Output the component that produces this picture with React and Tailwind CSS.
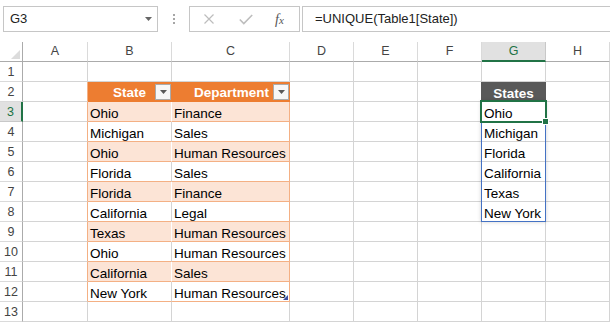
import React from 'react';

const cols = ['A', 'B', 'C', 'D', 'E', 'F', 'G', 'H'];

const tableRows = [
  ['Ohio', 'Finance'],
  ['Michigan', 'Sales'],
  ['Ohio', 'Human Resources'],
  ['Florida', 'Sales'],
  ['Florida', 'Finance'],
  ['California', 'Legal'],
  ['Texas', 'Human Resources'],
  ['Ohio', 'Human Resources'],
  ['California', 'Sales'],
  ['New York', 'Human Resources'],
];

const states = ['Ohio', 'Michigan', 'Florida', 'California', 'Texas', 'New York'];

const FilterButton = () => (
  <span className="flex h-[16px] w-[16px] shrink-0 items-center justify-center border border-[#ABABAB] bg-[#F7F7F7]">
    <svg width="7" height="4" viewBox="0 0 7 4">
      <path d="M0 0h7L3.5 4z" fill="#595959" />
    </svg>
  </span>
);

const FormulaBar = () => (
  <div className="flex h-[42px] items-start pt-[6px] text-[13px] text-[#222]">
    <div className="ml-[3px] flex h-[26px] w-[155px] shrink-0 items-center justify-between border border-[#C6C6C6] bg-white pl-[6px] pr-[5px]">
      <span>G3</span>
      <svg width="7" height="4" viewBox="0 0 7 4">
        <path d="M0 0h7L3.5 4z" fill="#666" />
      </svg>
    </div>
    <div className="flex h-[26px] w-[31px] shrink-0 flex-col items-center justify-center gap-[2px]">
      <span className="h-[2px] w-[2px] bg-[#A6A6A6]" />
      <span className="h-[2px] w-[2px] bg-[#A6A6A6]" />
      <span className="h-[2px] w-[2px] bg-[#A6A6A6]" />
    </div>
    <div className="flex h-[26px] w-[111px] shrink-0 items-center border border-[#C6C6C6] bg-white">
      <svg className="ml-[14px]" width="10" height="10" viewBox="0 0 10 10">
        <path d="M0.5 0.5l9 9M9.5 0.5l-9 9" stroke="#BDBDBD" strokeWidth="1.2" fill="none" />
      </svg>
      <svg className="ml-[25px]" width="14" height="11" viewBox="0 0 14 11">
        <path d="M0.8 5.5l4 4L13.2 1" stroke="#BDBDBD" strokeWidth="1.6" fill="none" />
      </svg>
      <span className="ml-[22px] font-['Liberation_Serif',serif] text-[14px] italic text-[#555]">
        f<span className="text-[11px]">x</span>
      </span>
    </div>
    <div className="ml-[2px] flex h-[26px] w-[330px] shrink-0 items-center border border-[#C6C6C6] bg-white pl-[12px]">
      =UNIQUE(Table1[State])
    </div>
  </div>
);

const cellClass = (r, c) => {
  // rows 2..12 belong to the table in B:C, G2..G8 hold the spill
  if (c === 'B') {
    if (r === 2) return 'bg-[#ED7D31] border-r-[#ED7D31] border-b-[#ED7D31]';
    if (r >= 3 && r <= 12) {
      return r % 2 === 1
        ? 'bg-[#FCE4D6] border-r-white border-b-[#F4B084]'
        : 'bg-white border-r-[#D4D4D4] border-b-[#F4B084]';
    }
  }
  if (c === 'C') {
    if (r === 2) return 'bg-[#ED7D31] border-r-[#ED7D31] border-b-[#ED7D31]';
    if (r >= 3 && r <= 12) {
      return r % 2 === 1
        ? 'bg-[#FCE4D6] border-r-[#F4B084] border-b-[#F4B084]'
        : 'bg-white border-r-[#F4B084] border-b-[#F4B084]';
    }
  }
  if (c === 'A' && r >= 2 && r <= 12) return 'bg-white border-r-[#F4B084] border-b-[#D4D4D4]';
  if (c === 'F' && r === 2) return 'bg-white border-r-[#595959] border-b-[#D4D4D4]';
  if (c === 'G' && r === 2) return 'bg-[#595959] border-r-[#595959] border-b-[#595959]';
  return 'bg-white border-r-[#D4D4D4] border-b-[#D4D4D4]';
};

const CellContent = ({ r, c }) => {
  if (r === 2 && c === 'B') {
    return (
      <div className="flex h-full w-full items-center justify-end">
        <span className="mr-[9px] pt-[2px] font-bold text-white">State</span>
        <FilterButton />
      </div>
    );
  }
  if (r === 2 && c === 'C') {
    return (
      <div className="flex h-full w-full items-center justify-end">
        <span className="mr-[4px] pt-[2px] font-bold text-white">Department</span>
        <FilterButton />
      </div>
    );
  }
  if (r === 2 && c === 'G') {
    return <div className="flex h-full w-full items-end justify-center font-bold text-white">States</div>;
  }
  let text = '';
  if (r >= 3 && r <= 12 && c === 'B') text = tableRows[r - 3][0];
  if (r >= 3 && r <= 12 && c === 'C') text = tableRows[r - 3][1];
  if (r >= 3 && r <= 8 && c === 'G') text = states[r - 3];
  return (
    <div className="flex h-full w-full items-end whitespace-nowrap pl-[2px] text-black">
      {text}
      {r === 3 && c === 'G' && (
        <>
          <span className="pointer-events-none absolute -left-[1px] -top-[1px] z-10 h-[121px] w-[65px] border border-[#4472C4] shadow-[0_0_4px_rgba(0,0,0,0.18)]" />
          <span className="pointer-events-none absolute -left-[2px] -top-[2px] z-20 h-[23px] w-[67px] border-2 border-[#217346]" />
          <span className="absolute left-[60px] top-[16px] z-30 h-[7px] w-[7px] border border-white bg-[#217346]" />
        </>
      )}
      {r === 12 && c === 'C' && (
        <svg className="absolute bottom-[1px] right-[1px]" width="5" height="5" viewBox="0 0 5 5">
          <path d="M5 0v5H0z" fill="#3F4FA0" />
        </svg>
      )}
    </div>
  );
};

export default function App() {
  const rowNums = Array.from({ length: 13 }, (_, i) => i + 1);

  return (
    <div className="h-[322px] w-[610px] overflow-hidden bg-white font-['Liberation_Sans',Arial,sans-serif]">
      <FormulaBar />
      <div className="grid grid-cols-[23px_65px_84px_118px_64px_64px_64px_64px_64px] text-[13.5px] leading-[15px]">
        {/* corner */}
        <div className="relative h-[20px] border-b border-r border-b-[#ABABAB] border-r-[#ABABAB] bg-white">
          <svg className="absolute bottom-[2px] right-[2px]" width="9" height="9" viewBox="0 0 9 9">
            <path d="M9 0v9H0z" fill="#DCDCDC" />
          </svg>
        </div>
        {cols.map((c) => (
          <div
            key={c}
            className={
              c === 'G'
                ? 'flex h-[20px] items-center justify-center border-b-2 border-r border-b-[#217346] border-r-[#C8C8C8] bg-[#E1E1E1] pt-[1px] text-[12.5px] text-[#217346]'
                : 'flex h-[20px] items-center justify-center border-b border-r border-b-[#ABABAB] border-r-[#DADADA] bg-white text-[12.5px] text-[#444]'
            }
          >
            {c}
          </div>
        ))}
        {rowNums.map((r) => (
          <React.Fragment key={r}>
            <div
              className={
                r === 3
                  ? 'flex h-[20px] items-end justify-center border-b border-r-2 border-b-[#C8C8C8] border-r-[#217346] bg-[#E1E1E1] pb-[2px] text-[12.5px] leading-[14px] text-[#217346]'
                  : 'flex h-[20px] items-end justify-center border-b border-r border-b-[#DADADA] border-r-[#ABABAB] bg-white pb-[2px] text-[12.5px] leading-[14px] text-[#444]'
              }
            >
              {r}
            </div>
            {cols.map((c) => (
              <div key={c} className={`relative h-[20px] border-b border-r ${cellClass(r, c)}`}>
                <CellContent r={r} c={c} />
              </div>
            ))}
          </React.Fragment>
        ))}
      </div>
    </div>
  );
}
